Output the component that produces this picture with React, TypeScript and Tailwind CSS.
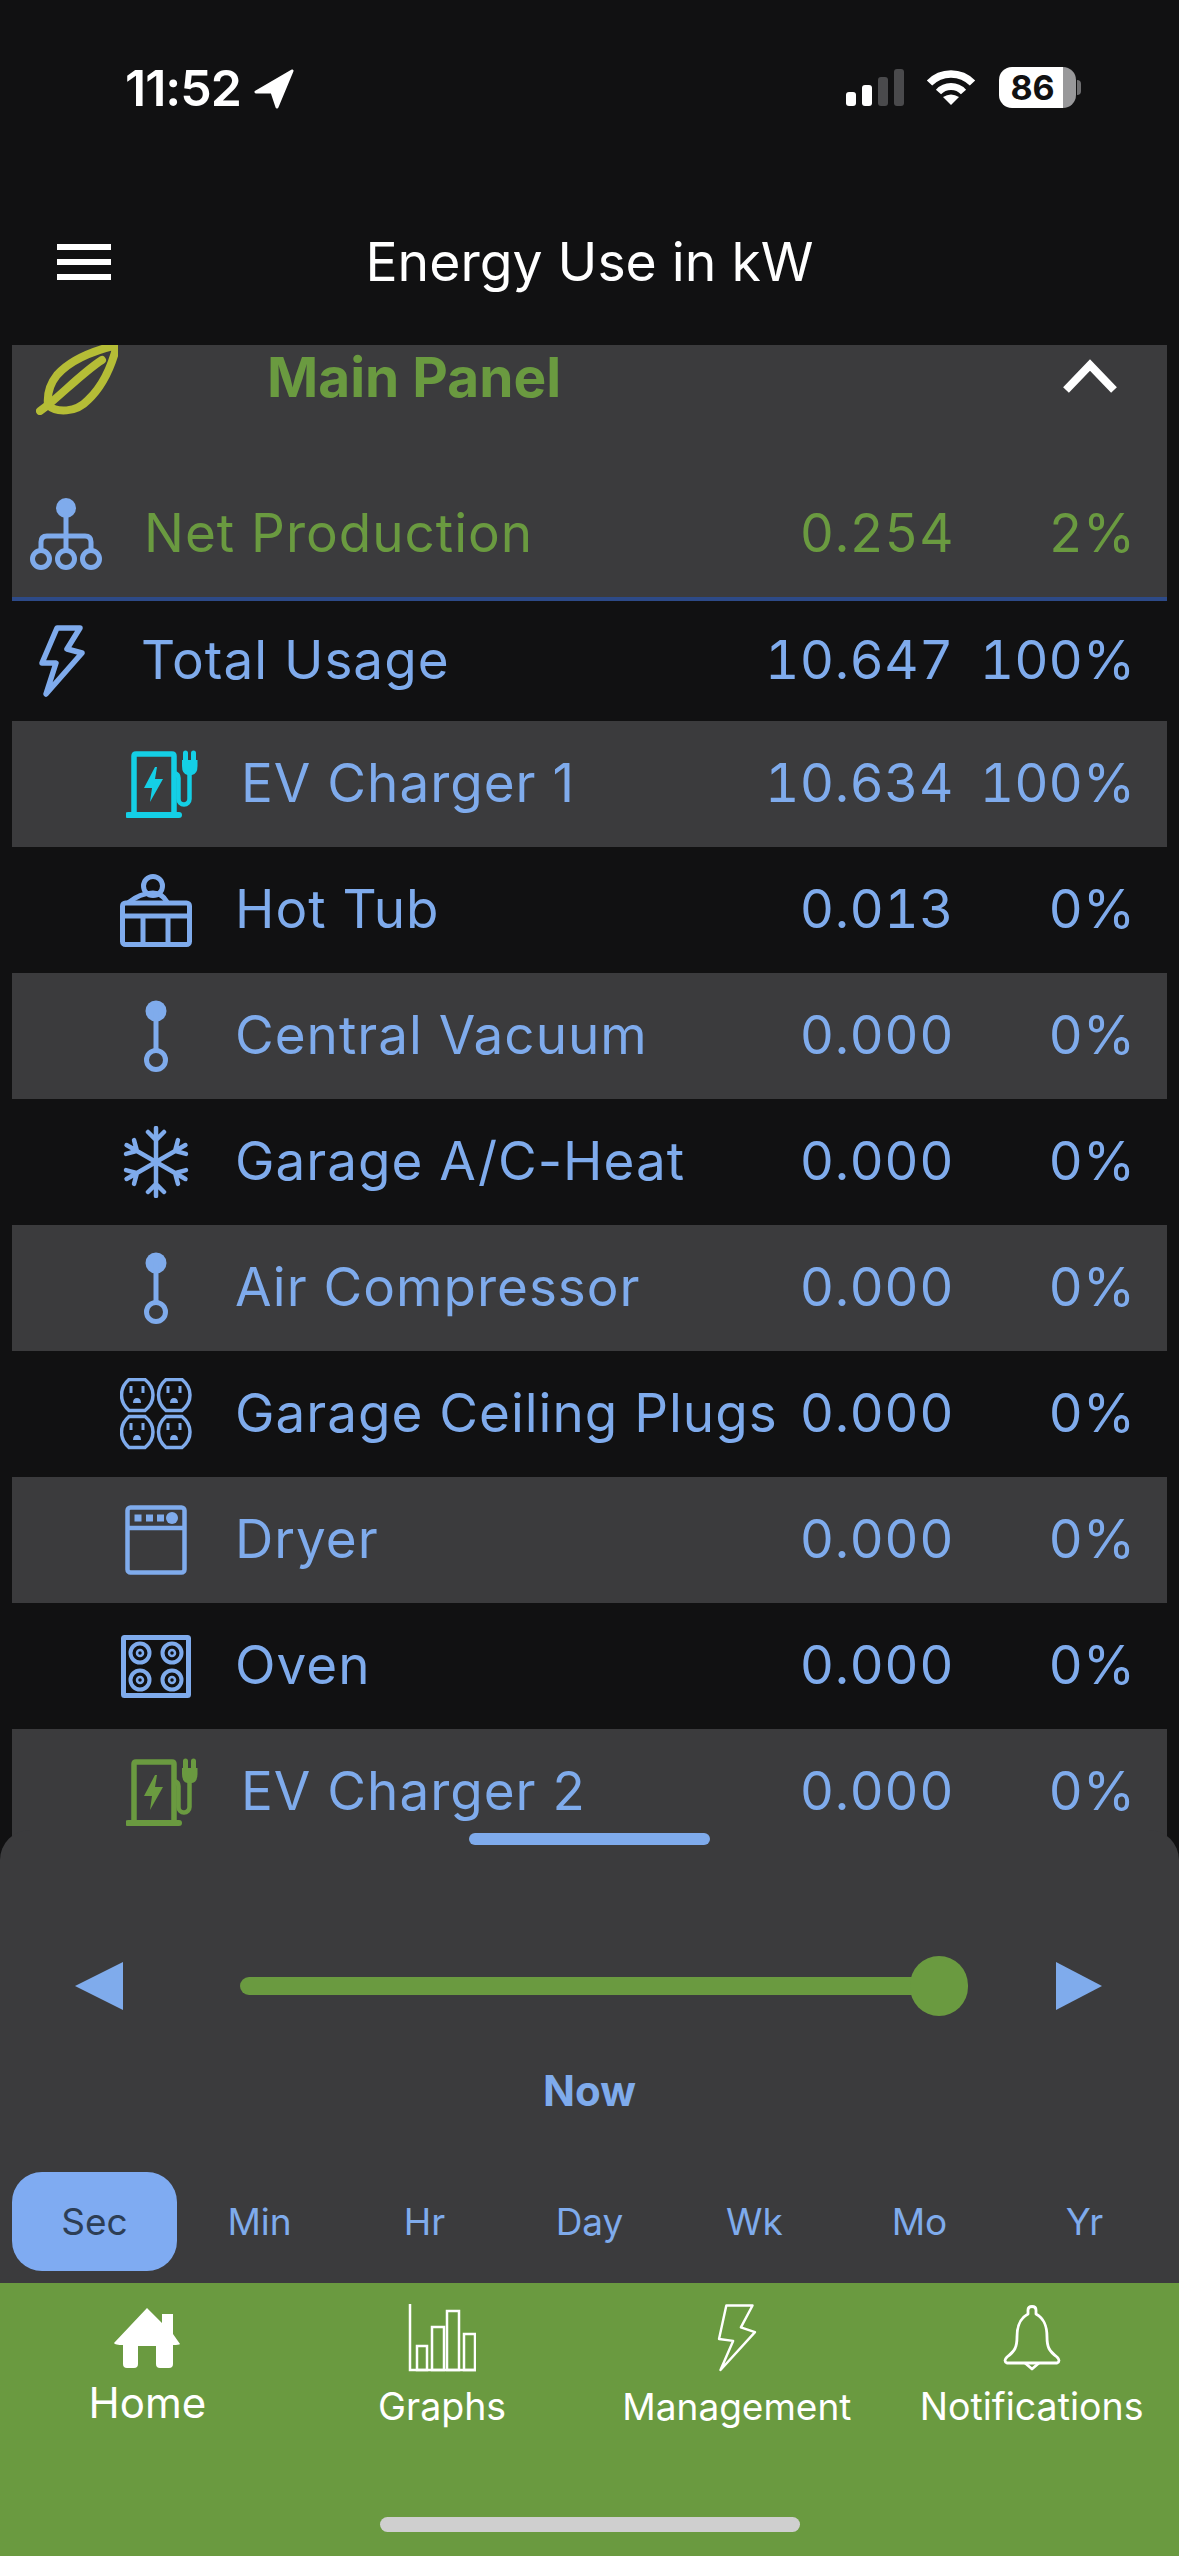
import type { ReactNode } from 'react';

const font = { fontFamily: 'Inter, "Noto Sans", sans-serif' };

// drawn icons, all in the blue of the list unless the caller changes the text colour
const NetIcon = () => (
  <svg viewBox="0 0 72 72" className="w-[72px] h-[72px]" fill="none" stroke="currentColor" strokeWidth="5">
    <circle cx="36" cy="10" r="10" fill="currentColor" stroke="none" />
    <path d="M36 10V52M11 52V44Q11 38 17 38H55Q61 38 61 44V52" />
    <circle cx="11" cy="61" r="8.5" />
    <circle cx="36" cy="61" r="8.5" />
    <circle cx="61" cy="61" r="8.5" />
  </svg>
);

const BoltIcon = () => (
  <svg viewBox="0 0 46 72" className="w-[46px] h-[72px]" fill="none" stroke="currentColor" strokeWidth="5.5" strokeLinejoin="round">
    <path d="M18 3H41L28 24L43 28L7 69L17 38H3Z" />
  </svg>
);

const ChargerIcon = () => (
  <svg viewBox="0 0 72 68" className="w-[72px] h-[68px]" fill="none" stroke="currentColor" strokeWidth="5.5">
    <path d="M8 65V6Q8 4 10 4H46Q48 4 48 6V65" />
    <path d="M2 65H53" strokeWidth="6" strokeLinecap="round" />
    <path d="M29 17L18 38H26L24 52L37 29H29L31 17Z" fill="currentColor" stroke="none" />
    <path d="M56 10H57V3Q57 0.5 59.5 0.5T62 3V10H65V3Q65 0.5 67.5 0.5T70 3V10H71.5V16Q71.5 24 66 25H61.5Q56 24 56 16Z" fill="currentColor" stroke="none" />
    <path d="M63.5 23V49A5.5 5.5 0 0 1 52.5 49V28Q52.5 24 48 23" strokeWidth="4.5" />
  </svg>
);

const HotTubIcon = () => (
  <svg viewBox="0 0 72 73" className="w-[72px] h-[73px]" fill="none" stroke="currentColor" strokeWidth="5" strokeLinejoin="round">
    <circle cx="33" cy="12" r="9.5" />
    <path d="M8 29Q20 19 33 19Q42 19 47 28" />
    <rect x="2.5" y="29" width="67" height="41.5" rx="3" />
    <path d="M2.5 42H69.5M23 42V70M48 42V70" />
  </svg>
);

const ValveIcon = () => (
  <svg viewBox="0 0 24 72" className="w-[24px] h-[72px]" fill="none" stroke="currentColor" strokeWidth="5">
    <circle cx="12" cy="11" r="10.5" fill="currentColor" stroke="none" />
    <path d="M12 11V50" />
    <circle cx="12" cy="60" r="9.5" />
  </svg>
);

const SnowIcon = () => (
  <svg viewBox="0 0 66 72" className="w-[66px] h-[72px]" fill="none" stroke="currentColor" strokeWidth="4.5" strokeLinecap="round">
    {[0, 60, 120, 180, 240, 300].map((deg) => (
      <g key={deg} transform={`rotate(${deg} 33 36)`}>
        <path d="M33 36V2M25 6L33 14L41 6" />
      </g>
    ))}
  </svg>
);

const Outlet = ({ x, y }: { x: number; y: number }) => (
  <g transform={`translate(${x} ${y})`}>
    <path d="M9 1.5H25Q33 8 33 17T25 32.5H9Q1.5 26 1.5 17T9 1.5Z" strokeWidth="3.5" fill="none" stroke="currentColor" />
    <path d="M11 8V15M23 8V15" strokeWidth="3" stroke="currentColor" />
    <path d="M13 25Q13 20 17 20T21 25Z" fill="currentColor" />
  </g>
);

const PlugsIcon = () => (
  <svg viewBox="0 0 72 72" className="w-[72px] h-[72px]">
    <Outlet x={0} y={0} />
    <Outlet x={37} y={0} />
    <Outlet x={0} y={37} />
    <Outlet x={37} y={37} />
  </svg>
);

const DryerIcon = () => (
  <svg viewBox="0 0 62 70" className="w-[62px] h-[70px]" fill="none" stroke="currentColor" strokeWidth="4.5">
    <rect x="2.5" y="2.5" width="57" height="65" rx="3" />
    <path d="M2.5 23H59.5" />
    <g fill="currentColor" stroke="none">
      <rect x="9.5" y="9.5" width="7" height="7" />
      <rect x="21" y="9.5" width="7" height="7" />
      <rect x="32" y="9.5" width="7" height="7" />
      <circle cx="47" cy="13" r="6" />
    </g>
  </svg>
);

const OvenIcon = () => (
  <svg viewBox="0 0 70 63" className="w-[70px] h-[63px]" fill="none" stroke="currentColor" strokeWidth="4">
    <rect x="2.5" y="2.5" width="65" height="58" rx="1" strokeWidth="5" />
    {[
      [19, 18],
      [51, 18],
      [19, 45],
      [51, 45],
    ].map(([cx, cy]) => (
      <g key={`${cx}-${cy}`}>
        <circle cx={cx} cy={cy} r="9.5" />
        <circle cx={cx} cy={cy} r="3" strokeWidth="2.5" />
      </g>
    ))}
  </svg>
);

interface Row {
  name: string;
  value: string;
  pct: string;
  icon: ReactNode;
  slot: string;
  rowClass: string;
  textClass?: string;
  iconClass?: string;
}

const child = 'w-[223px] pl-[84px] pr-[19px]';
const childEv = 'w-[229px] pl-[90px] pr-[19px]';
const dark = 'h-[126px]';
const grey = 'h-[126px] bg-[#3b3b3d]';

const rows: Row[] = [
  { name: 'Net Production', value: '0.254', pct: '2%', icon: <NetIcon />, slot: 'w-[132px] pr-[24px]', rowClass: 'h-[130px] bg-[#3b3b3d] border-b-4 border-[#2d4a88]', textClass: 'text-[#6a9a40]' },
  { name: 'Total Usage', value: '10.647', pct: '100%', icon: <BoltIcon />, slot: 'w-[129px] pr-[29px]', rowClass: 'h-[120px]' },
  { name: 'EV Charger 1', value: '10.634', pct: '100%', icon: <ChargerIcon />, slot: childEv, rowClass: grey, iconClass: 'text-[#14cfe6]' },
  { name: 'Hot Tub', value: '0.013', pct: '0%', icon: <HotTubIcon />, slot: child, rowClass: dark },
  { name: 'Central Vacuum', value: '0.000', pct: '0%', icon: <ValveIcon />, slot: child, rowClass: grey },
  { name: 'Garage A/C-Heat', value: '0.000', pct: '0%', icon: <SnowIcon />, slot: child, rowClass: dark },
  { name: 'Air Compressor', value: '0.000', pct: '0%', icon: <ValveIcon />, slot: child, rowClass: grey },
  { name: 'Garage Ceiling Plugs', value: '0.000', pct: '0%', icon: <PlugsIcon />, slot: child, rowClass: dark },
  { name: 'Dryer', value: '0.000', pct: '0%', icon: <DryerIcon />, slot: child, rowClass: grey },
  { name: 'Oven', value: '0.000', pct: '0%', icon: <OvenIcon />, slot: child, rowClass: dark },
  { name: 'EV Charger 2', value: '0.000', pct: '0%', icon: <ChargerIcon />, slot: childEv, rowClass: grey, iconClass: 'text-[#6a9a40]' },
];

const ranges = ['Sec', 'Min', 'Hr', 'Day', 'Wk', 'Mo', 'Yr'];

const StatusBar = () => (
  <div className="h-[190px] pt-[67px] pl-[125px] pr-[98px] flex items-start text-white">
    <span className="text-[50px] leading-[42px] font-semibold tracking-[-1px]">11:52</span>
    <svg viewBox="0 0 40 40" className="w-10 h-10 ml-[13px] mt-[2px]" fill="currentColor" stroke="currentColor" strokeWidth="3" strokeLinejoin="round">
      <path d="M38 2L2 23H18L23 38Z" />
    </svg>
    <div className="ml-auto flex items-start">
      <div className="flex items-end gap-[6px] h-[37px] mt-[2px]">
        <div className="w-[10px] h-[14px] rounded-[3px] bg-white" />
        <div className="w-[10px] h-[21px] rounded-[3px] bg-white" />
        <div className="w-[10px] h-[29px] rounded-[3px] bg-[#4a4a4c]" />
        <div className="w-[10px] h-[37px] rounded-[3px] bg-[#4a4a4c]" />
      </div>
      <svg viewBox="0 0 52 38" className="w-[52px] h-[38px] ml-[21px] mt-[1px]" fill="none" stroke="white">
        <path d="M4.5 15A30 30 0 0 1 47.5 15" strokeWidth="7.5" />
        <path d="M13.5 24A17 17 0 0 1 38.5 24" strokeWidth="7" />
        <path d="M26 37L18 29Q26 24 34 29Z" fill="white" stroke="none" />
      </svg>
      <div className="ml-[22px] w-[77px] h-[41px] rounded-[13px] overflow-hidden flex">
        <div className="flex-1 bg-white text-[#111112] text-[34px] leading-[41px] font-bold text-center pl-[3px]">86</div>
        <div className="w-[13px] bg-[#98989a]" />
      </div>
      <div className="ml-[1px] mt-[13px] w-[4px] h-[15px] rounded-r-full bg-[#6e6e70]" />
    </div>
  </div>
);

const Header = () => (
  <div className="h-[155px] pb-[12px] grid grid-cols-[1fr_auto_1fr] items-center text-white">
    <div className="pl-[57px] flex flex-col gap-[9px]">
      <div className="w-[54px] h-[6px] bg-white" />
      <div className="w-[54px] h-[6px] bg-white" />
      <div className="w-[54px] h-[6px] bg-white" />
    </div>
    <span className="text-[53.5px] leading-[60px]">Energy Use in kW</span>
    <div />
  </div>
);

const PanelHeader = () => (
  <div className="h-[126px] bg-[#3b3b3d] flex items-start">
    <svg viewBox="0 0 82 70" className="ml-[24px] w-[82px] h-[70px] shrink-0" fill="none" stroke="#b5bd36" strokeWidth="8" strokeLinecap="round">
      <path d="M81 0C60 5 35 14 21 30C13 40 11 50 12 60C20 68 40 68 52 55C68 40 76 20 81 0Z" />
      <path d="M4 66L12 60C30 45 50 25 66 15" />
    </svg>
    <span className="ml-[149px] mt-[1px] text-[55px] leading-[62px] font-bold text-[#6a9a40]">Main Panel</span>
    <svg viewBox="0 0 54 34" className="ml-auto mr-[50px] mt-[14px] w-[54px] h-[34px]" fill="none" stroke="white" strokeWidth="8">
      <path d="M3 31L27 6L51 31" />
    </svg>
  </div>
);

const ListRow = ({ row }: { row: Row }) => (
  <div className={`flex items-center pr-[32px] text-[53px] tracking-[1px] whitespace-nowrap ${row.rowClass} ${row.textClass ?? 'text-[#7fabec]'}`}>
    <div className={`flex justify-center shrink-0 ${row.slot} ${row.iconClass ?? 'text-[#7fabec]'}`}>{row.icon}</div>
    <span className="flex-1 min-w-0">{row.name}</span>
    <span className="shrink-0 text-right tabular-nums tracking-[0.5px]">{row.value}</span>
    <span className="w-[181px] shrink-0 text-right tabular-nums tracking-normal">{row.pct}</span>
  </div>
);

const TimeSheet = () => (
  <div className="relative z-10 h-[453px] -mt-[30px] shrink-0 rounded-t-[30px] bg-[#3b3b3d]">
    <div className="pt-[3px]">
      <div className="mx-auto w-[241px] h-3 rounded-full bg-[#7fabec]" />
    </div>
    <div className="mt-[111px] pl-[75px] flex items-center h-[60px]">
      <svg viewBox="0 0 48 48" className="w-12 h-12 shrink-0">
        <path d="M0 24L48 0V48Z" fill="#7fabec" />
      </svg>
      <div className="ml-[117px] w-[728px] shrink-0 flex items-center">
        <div className="flex-1 h-[18px] rounded-l-full bg-[#6a9a40]" />
        <div className="-ml-[30px] w-[58px] h-[60px] rounded-full bg-[#6a9a40]" />
      </div>
      <svg viewBox="0 0 46 48" className="ml-[88px] w-[46px] h-12 shrink-0">
        <path d="M46 24L0 0V48Z" fill="#7fabec" />
      </svg>
    </div>
    <div className="mt-[45px] text-center text-[42px] leading-[60px] font-bold text-[#7fabec]">Now</div>
    <div className="mt-[51px] mx-3 grid grid-cols-7 h-[99px]">
      {ranges.map((range, i) => (
        <div
          key={range}
          className={`flex items-center justify-center text-[37px] rounded-[30px] ${i === 0 ? 'bg-[#7fabf2] text-[#2d3e55]' : 'text-[#7fabec]'}`}
        >
          {range}
        </div>
      ))}
    </div>
  </div>
);

const BottomNav = () => (
  <div className="h-[273px] shrink-0 bg-[#6a9a40] text-white flex flex-col items-center justify-between pb-[24px]">
    <div className="w-full grid grid-cols-4 pt-[21px]">
      <div className="flex flex-col items-center">
        <div className="h-[68px] flex items-center">
          <svg viewBox="0 0 66 60" className="w-[66px] h-[60px]" fill="white">
            <path d="M33 0L48 15V6H59V26L66 36Q65 37 59 37V56Q59 60 55 60H46Q42 60 42 56V38H24V56Q24 60 20 60H13Q9 60 9 56V37Q1 37 0 35Z" />
          </svg>
        </div>
        <span className="mt-[7px] text-[42px] leading-[48px]">Home</span>
      </div>
      <div className="flex flex-col items-center">
        <svg viewBox="0 0 68 68" className="w-[68px] h-[68px]" fill="none" stroke="white" strokeWidth="2.5">
          <path d="M2 0V66H68" />
          <rect x="9" y="42" width="10" height="24" />
          <rect x="24" y="23" width="12" height="43" />
          <rect x="39" y="7" width="12" height="59" />
          <rect x="56" y="30" width="11" height="36" />
        </svg>
        <span className="mt-[13px] text-[37.5px] leading-[44px]">Graphs</span>
      </div>
      <div className="flex flex-col items-center">
        <svg viewBox="0 0 40 70" className="w-[40px] h-[68px]" fill="none" stroke="white" strokeWidth="2.5" strokeLinejoin="round">
          <path d="M9 1.5H36L24 24L38.5 29L3 68L16 38L1.5 36Z" />
        </svg>
        <span className="mt-[13px] text-[37px] leading-[44px]">Management</span>
      </div>
      <div className="flex flex-col items-center">
        <div className="h-[68px] flex items-center">
          <svg viewBox="0 0 58 66" className="w-[58px] h-[66px]" fill="none" stroke="white" strokeWidth="2.8" strokeLinejoin="round">
            <path d="M25 9V5Q25 1.5 29 1.5T33 5V9C42 14 44 22 44 32C44 42 46 46 54 52Q58 56 54 58H4Q0 56 4 52C12 46 14 42 14 32C14 22 16 14 25 9Z" />
            <path d="M22 58L29 64L36 58" />
          </svg>
        </div>
        <span className="mt-[13px] text-[37.5px] leading-[44px]">Notifications</span>
      </div>
    </div>
    <div className="w-[420px] h-[15px] rounded-full bg-[#cfcfcf]" />
  </div>
);

export default function App() {
  return (
    <div className="w-[1179px] h-[2556px] bg-[#111112] flex flex-col overflow-hidden" style={font}>
      <StatusBar />
      <Header />
      <div className="flex-1 min-h-0 mx-3 overflow-hidden">
        <PanelHeader />
        {rows.map((row) => (
          <ListRow key={row.name} row={row} />
        ))}
      </div>
      <TimeSheet />
      <BottomNav />
    </div>
  );
}
